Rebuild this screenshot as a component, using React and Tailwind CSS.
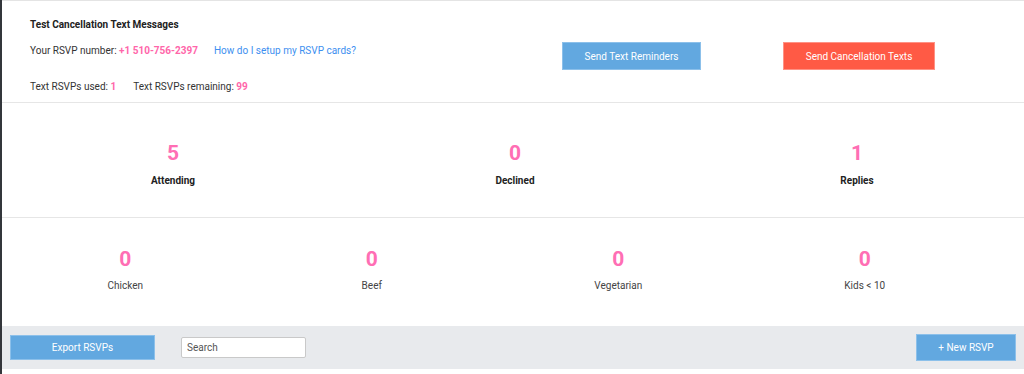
export default function App() {
  return (
    <div className="w-[1024px] h-[374px] bg-white flex text-[10px] text-[#333]" style={{ fontFamily: "Roboto, 'Liberation Sans', sans-serif" }}>
      <div className="w-[2px] bg-[#33363b] shrink-0" />
      <div className="flex-1 flex flex-col border-t border-[#e4e4e4]">
        <div className="h-[102px] flex border-b border-[#e6e6e6]">
          <div className="w-[540px] pl-[28px] pt-[17px]">
            <div className="font-bold text-[#222] leading-[14px]">Test Cancellation Text Messages</div>
            <div className="mt-[12px] flex leading-[14px]">
              <span>Your RSVP number: <span className="text-[#ff66aa] font-bold">+1 510-756-2397</span></span>
              <span className="ml-[16px] text-[#3d8ff0]">How do I setup my RSVP cards?</span>
            </div>
            <div className="mt-[22px] flex leading-[14px]">
              <span>Text RSVPs used: <span className="text-[#ff66aa] font-bold">1</span></span>
              <span className="ml-[17px]">Text RSVPs remaining: <span className="text-[#ff66aa] font-bold">99</span></span>
            </div>
          </div>
          <div className="pt-[41px] flex">
            <div className="ml-[20px] w-[139px] h-[28px] bg-[#62a8e0] border border-[#8cc0ea] text-white flex items-center justify-center">Send Text Reminders</div>
            <div className="ml-[82px] w-[152px] h-[28px] bg-[#ff5a45] border border-[#ff9285] text-white flex items-center justify-center">Send Cancellation Texts</div>
          </div>
        </div>
        <div className="h-[115px] grid grid-cols-3 border-b border-[#e6e6e6] w-[1026px]">
          {[["5", "Attending"], ["0", "Declined"], ["1", "Replies"]].map(([n, l]) => (
            <div key={l} className="flex flex-col items-center pt-[38px]">
              <div className="text-[21px] font-bold text-[#ff6eb4] leading-[24px]">{n}</div>
              <div className="mt-[9px] font-bold text-[#222] leading-[14px]">{l}</div>
            </div>
          ))}
        </div>
        <div className="h-[108px] grid grid-cols-4 w-[986px]">
          {[["0", "Chicken"], ["0", "Beef"], ["0", "Vegetarian"], ["0", "Kids < 10"]].map(([n, l]) => (
            <div key={l} className="flex flex-col items-center pt-[29px]">
              <div className="text-[21px] font-bold text-[#ff6eb4] leading-[24px]">{n}</div>
              <div className="mt-[8px] text-[#444] leading-[14px]">{l}</div>
            </div>
          ))}
        </div>
        <div className="h-[43px] bg-[#e8eaed] mr-[4px] flex items-center px-[8px]">
          <div className="w-[145px] h-[25px] bg-[#62a8e0] border border-[#8cc0ea] text-white flex items-center justify-center">Export RSVPs</div>
          <div className="ml-[26px] w-[125px] h-[21px] bg-white border border-[#c9c9c9] rounded-[2px] flex items-center px-[5px] text-[#555]">Search</div>
          <div className="flex-1" />
          <div className="w-[100px] h-[27px] bg-[#62a8e0] border border-[#8cc0ea] text-white flex items-center justify-center">+ New RSVP</div>
        </div>
        <div className="flex-1" />
      </div>
    </div>
  );
}
